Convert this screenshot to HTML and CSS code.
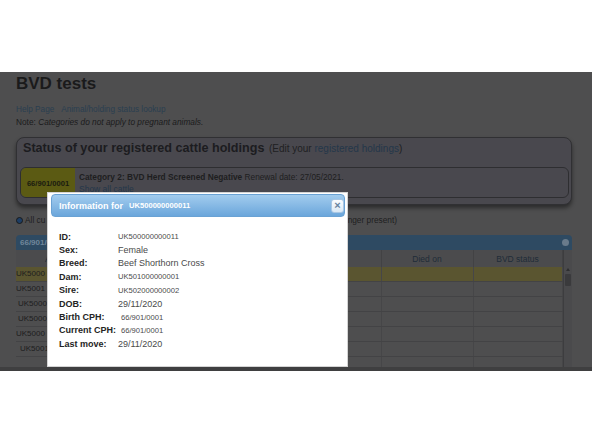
FILE: index.html
```html
<!DOCTYPE html>
<html lang="en">
<head>
  <meta charset="UTF-8">
  <title>BVD tests</title>
  <link rel="stylesheet" href="styles.css">
</head>
<body>
  <div class="topSpace"></div>

  <!-- page behind the modal, drawn in its dimmed colours -->
  <div class="screen">
    <div class="page">
      <h1>BVD tests</h1>
      <div class="links"><a href="#">Help Page</a><a href="#">Animal/holding status lookup</a></div>
      <div class="note">Note: <em>Categories do not apply to pregnant animals.</em></div>

      <div class="statusBox">
        <div class="statusHead">
          <span class="bigHead">Status of your registered cattle holdings</span>
          <span class="edit">(Edit your <a href="#">registered holdings</a>)</span>
        </div>
        <div class="holding">
          <div class="cph">66/901/0001</div>
          <div class="holdingInfo">
            <div><b>Category 2: BVD Herd Screened Negative</b> Renewal date: 27/05/2021.</div>
            <a href="#">Show all cattle</a>
          </div>
        </div>
      </div>

      <div class="filter">
        <span class="radio"></span>
        <span>All cu</span>
        <span class="filterRest">nger present)</span>
      </div>

      <div class="grid">
        <div class="gridHead">
          <span>66/901/0</span>
          <span class="collapse"></span>
        </div>
        <div class="gridBody">
          <table class="cattle">
            <colgroup>
              <col class="c1"><col class="c2"><col class="c3"><col class="c4"><col class="c5"><col class="c6">
            </colgroup>
            <tr>
              <th class="first">A</th><th></th><th></th><th></th><th>Died on</th><th>BVD status</th>
            </tr>
            <tr class="picked"><td>UK5000</td><td></td><td></td><td></td><td></td><td></td></tr>
            <tr><td>UK5001</td><td></td><td></td><td></td><td></td><td></td></tr>
            <tr><td class="ind2">UK5000</td><td></td><td></td><td></td><td></td><td></td></tr>
            <tr><td class="ind2">UK5000</td><td></td><td></td><td></td><td></td><td></td></tr>
            <tr><td>UK5000</td><td></td><td></td><td></td><td></td><td></td></tr>
            <tr><td class="ind4">UK5001</td><td></td><td></td><td></td><td></td><td></td></tr>
            <tr><td></td><td></td><td></td><td></td><td></td><td></td></tr>
          </table>
          <div class="scroll">
            <div class="scrollTop"></div>
            <div class="arrow"></div>
            <div class="thumb"></div>
          </div>
        </div>
      </div>
    </div>

    <div class="dialog">
      <div class="dlgTitle">
        <span class="dlgLabel">Information for</span>
        <span class="dlgId">UK500000000011</span>
        <span class="close">&times;</span>
      </div>
      <div class="dlgBody">
        <div class="infoRow"><span class="lbl">ID:</span><span class="val small">UK500000000011</span></div>
        <div class="infoRow"><span class="lbl">Sex:</span><span class="val">Female</span></div>
        <div class="infoRow"><span class="lbl">Breed:</span><span class="val">Beef Shorthorn Cross</span></div>
        <div class="infoRow"><span class="lbl">Dam:</span><span class="val small">UK501000000001</span></div>
        <div class="infoRow"><span class="lbl">Sire:</span><span class="val small">UK502000000002</span></div>
        <div class="infoRow"><span class="lbl">DOB:</span><span class="val">29/11/2020</span></div>
        <div class="infoRow"><span class="lbl">Birth CPH:</span><span class="val small shift">66/901/0001</span></div>
        <div class="infoRow"><span class="lbl">Current CPH:</span><span class="val small shift">66/901/0001</span></div>
        <div class="infoRow"><span class="lbl">Last move:</span><span class="val">29/11/2020</span></div>
      </div>
    </div>
  </div>
</body>
</html>
```

FILE: styles.css
```css
body {
  margin: 0;
  background: #ffffff;
  font-family: "Liberation Sans", Arial, sans-serif;
}

.topSpace {
  height: 72px;
}

.screen {
  position: relative;
  height: 295px;
  background: #4e4e4f;
  border-bottom: 4px solid #3f3f40;
  overflow: hidden;
}

.page {
  padding: 2px 20px 0 16px;
  color: #1b1b1c;
}

h1 {
  margin: 0;
  font-size: 17px;
  line-height: 20px;
  color: #1a1a1b;
}

.links {
  margin-top: 10px;
  font-size: 8.2px;
  line-height: 12px;
}

.links a {
  color: #2a3e4f;
  text-decoration: none;
  margin-right: 7px;
}

.note {
  font-size: 8.3px;
  line-height: 12px;
}

.statusBox {
  margin-top: 9px;
  border: 1px solid #303033;
  border-radius: 8px;
  background: #49484e;
  box-shadow: 0 3px 4px rgba(0, 0, 0, 0.45);
  padding: 1px 2px 6px 3px;
}

.statusHead {
  padding-left: 3px;
  line-height: 16px;
  margin-bottom: 10px;
  white-space: nowrap;
}

.bigHead {
  font-size: 12.6px;
  font-weight: bold;
  color: #1c1c20;
}

.edit {
  font-size: 10px;
  color: #202022;
}

.edit a, .holdingInfo a {
  color: #24374a;
  text-decoration: none;
}

.holding {
  display: flex;
  height: 29px;
  border: 1px solid #2e2e31;
  border-radius: 6px;
}

.cph {
  width: 54px;
  background: #5b5a13;
  border-radius: 5px 0 0 5px;
  display: flex;
  align-items: center;
  justify-content: center;
  font-size: 7.6px;
  font-weight: bold;
  color: #1a1a10;
  padding-top: 2px;
  box-sizing: border-box;
}

.holdingInfo {
  padding: 3px 0 0 4px;
  font-size: 8.3px;
  line-height: 12px;
  color: #1e1e20;
}

.holdingInfo a {
  font-size: 8.5px;
}

.filter {
  margin-top: 9px;
  display: flex;
  align-items: center;
  font-size: 8.3px;
  line-height: 12px;
  white-space: nowrap;
  color: #1e1e1f;
}

.radio {
  width: 5px;
  height: 5px;
  border-radius: 50%;
  border: 1px solid #1a1a1a;
  background: #1d3e66;
  margin-right: 2px;
}

/* the middle of this sentence is under the dialog */
.filterRest {
  margin-left: auto;
  margin-right: 175px;
}

.grid {
  margin-top: 9px;
}

.gridHead {
  height: 15px;
  background: #2e4a62;
  border-radius: 4px 4px 0 0;
  display: flex;
  align-items: center;
  justify-content: space-between;
  padding: 0 3px 0 4px;
  font-size: 8px;
  font-weight: bold;
  color: #70869a;
}

.collapse {
  width: 7px;
  height: 7px;
  border-radius: 50%;
  background: #6a7b8b;
}

.gridBody {
  display: flex;
}

.cattle {
  width: 546px;
  border-collapse: collapse;
  table-layout: fixed;
  font-size: 8px;
}

.c1 { width: 84px; }
.c2 { width: 100px; }
.c3 { width: 90px; }
.c4 { width: 91px; }
.c5 { width: 92px; }
.c6 { width: 89px; }

.cattle th {
  height: 17px;
  padding: 0;
  font-weight: normal;
  font-size: 8.5px;
  color: #1f2b38;
  background: #4b4b4d;
  border-right: 1px solid #424244;
}

.cattle th.first {
  text-align: left;
  padding-left: 29px;
}

.cattle td {
  height: 14px;
  padding: 0;
  line-height: 14px;
  white-space: nowrap;
  overflow: hidden;
  color: #1d1d1e;
  border-bottom: 1px solid #434345;
  border-right: 1px solid #464648;
}

.cattle .picked td {
  background: #5a5530;
}

.cattle td.ind2 { padding-left: 2px; }
.cattle td.ind4 { padding-left: 4px; }

.scroll {
  width: 10px;
  background: #4a4a4c;
  border-left: 1px solid #3d3d3f;
  box-sizing: border-box;
}

.scrollTop {
  height: 18px;
}

.arrow {
  width: 0;
  height: 0;
  margin: 0 auto 3px;
  border-left: 2px solid transparent;
  border-right: 2px solid transparent;
  border-bottom: 3px solid #2e2e30;
}

.thumb {
  width: 6px;
  height: 12px;
  margin: 0 auto;
  background: #3a3a3c;
  border-radius: 1px;
}

/* modal */
.dialog {
  position: absolute;
  left: 47px;
  top: 120px;
  width: 301px;
  height: 175px;
  box-sizing: border-box;
  background: #ffffff;
  border: 1px solid #d4d4d4;
  padding: 1px 2px 0 3px;
}

.dlgTitle {
  height: 23px;
  box-sizing: border-box;
  border: 1px solid #6aa2d4;
  border-radius: 4px;
  background: linear-gradient(#a2ccee, #6ba6db);
  display: flex;
  align-items: center;
  padding: 0 0 0 7px;
  color: #ffffff;
  font-weight: bold;
}

.dlgLabel {
  font-size: 9px;
}

.dlgId {
  font-size: 7.6px;
  margin-left: 6px;
}

.close {
  margin-left: auto;
  width: 13px;
  height: 14px;
  box-sizing: border-box;
  border: 1px solid #a9c7e4;
  border-radius: 3px;
  background: linear-gradient(#fbfdff, #d9e8f5);
  color: #6783a0;
  font-size: 11px;
  line-height: 11px;
  text-align: center;
}

.dlgBody {
  padding: 13px 0 0 8px;
}

.infoRow {
  display: flex;
  align-items: center;
  height: 13.4px;
}

.lbl {
  width: 59px;
  flex-shrink: 0;
  font-size: 9px;
  font-weight: bold;
  color: #242424;
}

.val {
  font-size: 9px;
  color: #4a4a4a;
}

.val.small {
  font-size: 7.6px;
}

.val.shift {
  padding-left: 3px;
}
```
